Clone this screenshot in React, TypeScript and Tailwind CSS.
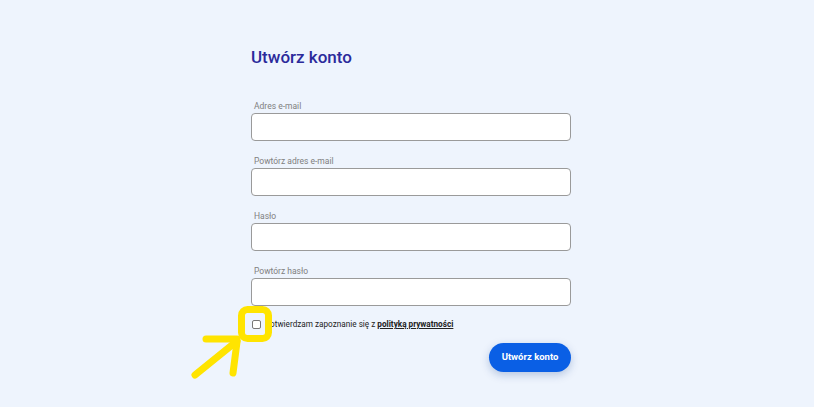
import React from "react";

const fields = ["Adres e-mail", "Powtórz adres e-mail", "Hasło", "Powtórz hasło"];

export default function App() {
  return (
    <div
      className="relative min-h-[407px] w-full bg-[#eef4fd]"
      style={{ fontFamily: "Roboto, 'Liberation Sans', sans-serif" }}
    >
      <div className="flex justify-center pt-[45px]">
        <div className="ml-[8px] w-[320px]">
          <h1 className="text-[17px] font-medium leading-[24px] text-[#2b2a9b]">Utwórz konto</h1>
          <div className="mt-[31px] flex flex-col gap-[14px]">
            {fields.map((f) => (
              <div key={f} className="flex flex-col">
                <label className="pl-[3px] text-[8.5px] leading-[12px] text-[#808080] mb-[1px]">{f}</label>
                <input
                  type={f.startsWith("Has") || f.startsWith("Powtórz has") ? "password" : "text"}
                  className="h-[28px] w-full rounded-[4px] border border-[#9a9a9a] bg-white outline-none"
                />
              </div>
            ))}
          </div>
          <div className="mt-[12px] flex items-center gap-[4px] pl-[1px]">
            <span className="inline-block h-[9px] w-[9px] rounded-[2px] border border-[#777] bg-white" />
            <span className="text-[8.2px] leading-[12px] text-[#222]">
              Potwierdzam zapoznanie się z{" "}
              <span className="font-bold underline">polityką prywatności</span>
            </span>
          </div>
          <div className="mt-[13px] flex justify-end">
            <button className="h-[29px] w-[82px] rounded-full bg-[#0a5fe5] text-[9.5px] font-bold text-white shadow-[0_3px_8px_rgba(10,60,140,0.25)]">
              Utwórz konto
            </button>
          </div>
        </div>
      </div>
      <svg
        className="pointer-events-none absolute left-0 top-0"
        width="814"
        height="407"
        viewBox="0 0 814 407"
      >
        <g stroke="#ffe400" fill="none" strokeLinecap="round" strokeLinejoin="round">
          <rect x="241.5" y="309.5" width="27" height="29" rx="6" strokeWidth="7" />
          <line x1="195" y1="375" x2="237" y2="341" strokeWidth="7" />
          <line x1="206" y1="339" x2="237" y2="339" strokeWidth="7" />
          <line x1="237" y1="342" x2="233" y2="373" strokeWidth="7" />
        </g>
      </svg>
    </div>
  );
}
